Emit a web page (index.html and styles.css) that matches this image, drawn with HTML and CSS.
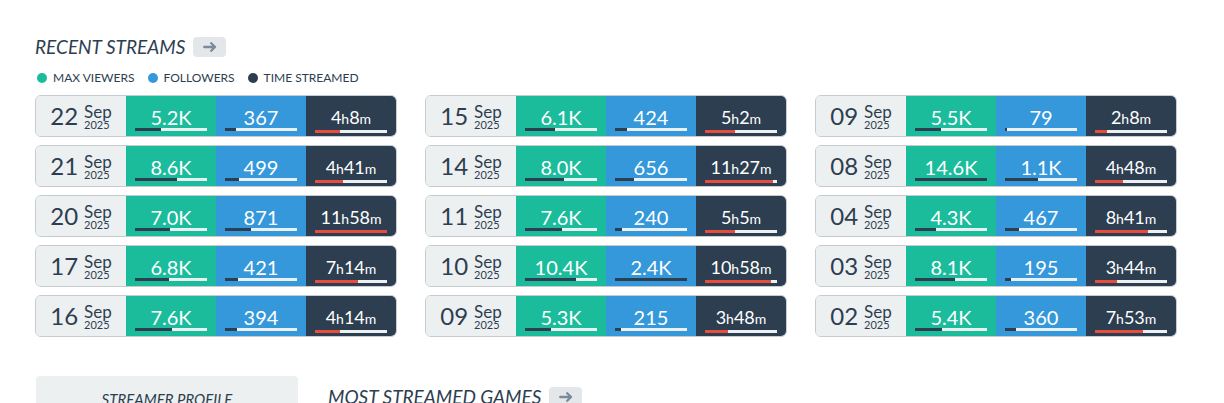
FILE: index.html
```html
<!DOCTYPE html>
<html>
<head>
<meta charset="utf-8">
<link rel="stylesheet" href="styles.css">
</head>
<body>
<div class="page">
  <div class="heading">
    <h2 class="heading-title">RECENT STREAMS</h2>
    <span class="arrow-btn"><svg width="14" height="10" viewBox="0 0 14 10"><path d="M1.2 5H12M8.2 1.2L12 5L8.2 8.8" fill="none" stroke="#7b8a9a" stroke-width="2.3" stroke-linecap="round" stroke-linejoin="round"/></svg></span>
  </div>
  <div class="legend">
    <span class="legend-item"><i class="dot dot-green"></i>MAX VIEWERS</span>
    <span class="legend-item"><i class="dot dot-blue"></i>FOLLOWERS</span>
    <span class="legend-item"><i class="dot dot-dark"></i>TIME STREAMED</span>
  </div>

  <div class="streams">
    <div class="col">
      <div class="card"><div class="date"><span class="day">22</span><span class="my"><span class="mon">Sep</span><span class="yr">2025</span></span></div><div class="cell green"><span class="val">5.2K</span><span class="bar"><span class="fill" style="width:36%"></span></span></div><div class="cell blue"><span class="val">367</span><span class="bar"><span class="fill" style="width:15%"></span></span></div><div class="cell dark"><span class="val time">4<small>h</small>8<small>m</small></span><span class="bar"><span class="fill" style="width:35%"></span></span></div></div>
      <div class="card"><div class="date"><span class="day">21</span><span class="my"><span class="mon">Sep</span><span class="yr">2025</span></span></div><div class="cell green"><span class="val">8.6K</span><span class="bar"><span class="fill" style="width:59%"></span></span></div><div class="cell blue"><span class="val">499</span><span class="bar"><span class="fill" style="width:20%"></span></span></div><div class="cell dark"><span class="val time">4<small>h</small>41<small>m</small></span><span class="bar"><span class="fill" style="width:39%"></span></span></div></div>
      <div class="card"><div class="date"><span class="day">20</span><span class="my"><span class="mon">Sep</span><span class="yr">2025</span></span></div><div class="cell green"><span class="val">7.0K</span><span class="bar"><span class="fill" style="width:48%"></span></span></div><div class="cell blue"><span class="val">871</span><span class="bar"><span class="fill" style="width:36%"></span></span></div><div class="cell dark"><span class="val time">11<small>h</small>58<small>m</small></span><span class="bar"><span class="fill" style="width:100%"></span></span></div></div>
      <div class="card"><div class="date"><span class="day">17</span><span class="my"><span class="mon">Sep</span><span class="yr">2025</span></span></div><div class="cell green"><span class="val">6.8K</span><span class="bar"><span class="fill" style="width:47%"></span></span></div><div class="cell blue"><span class="val">421</span><span class="bar"><span class="fill" style="width:18%"></span></span></div><div class="cell dark"><span class="val time">7<small>h</small>14<small>m</small></span><span class="bar"><span class="fill" style="width:60%"></span></span></div></div>
      <div class="card"><div class="date"><span class="day">16</span><span class="my"><span class="mon">Sep</span><span class="yr">2025</span></span></div><div class="cell green"><span class="val">7.6K</span><span class="bar"><span class="fill" style="width:52%"></span></span></div><div class="cell blue"><span class="val">394</span><span class="bar"><span class="fill" style="width:16%"></span></span></div><div class="cell dark"><span class="val time">4<small>h</small>14<small>m</small></span><span class="bar"><span class="fill" style="width:35%"></span></span></div></div>
    </div>
    <div class="col">
      <div class="card"><div class="date"><span class="day">15</span><span class="my"><span class="mon">Sep</span><span class="yr">2025</span></span></div><div class="cell green"><span class="val">6.1K</span><span class="bar"><span class="fill" style="width:42%"></span></span></div><div class="cell blue"><span class="val">424</span><span class="bar"><span class="fill" style="width:17%"></span></span></div><div class="cell dark"><span class="val time">5<small>h</small>2<small>m</small></span><span class="bar"><span class="fill" style="width:42%"></span></span></div></div>
      <div class="card"><div class="date"><span class="day">14</span><span class="my"><span class="mon">Sep</span><span class="yr">2025</span></span></div><div class="cell green"><span class="val">8.0K</span><span class="bar"><span class="fill" style="width:54%"></span></span></div><div class="cell blue"><span class="val">656</span><span class="bar"><span class="fill" style="width:26%"></span></span></div><div class="cell dark"><span class="val time">11<small>h</small>27<small>m</small></span><span class="bar"><span class="fill" style="width:95%"></span></span></div></div>
      <div class="card"><div class="date"><span class="day">11</span><span class="my"><span class="mon">Sep</span><span class="yr">2025</span></span></div><div class="cell green"><span class="val">7.6K</span><span class="bar"><span class="fill" style="width:52%"></span></span></div><div class="cell blue"><span class="val">240</span><span class="bar"><span class="fill" style="width:10%"></span></span></div><div class="cell dark"><span class="val time">5<small>h</small>5<small>m</small></span><span class="bar"><span class="fill" style="width:42%"></span></span></div></div>
      <div class="card"><div class="date"><span class="day">10</span><span class="my"><span class="mon">Sep</span><span class="yr">2025</span></span></div><div class="cell green"><span class="val">10.4K</span><span class="bar"><span class="fill" style="width:71%"></span></span></div><div class="cell blue"><span class="val">2.4K</span><span class="bar"><span class="fill" style="width:100%"></span></span></div><div class="cell dark"><span class="val time">10<small>h</small>58<small>m</small></span><span class="bar"><span class="fill" style="width:92%"></span></span></div></div>
      <div class="card"><div class="date"><span class="day">09</span><span class="my"><span class="mon">Sep</span><span class="yr">2025</span></span></div><div class="cell green"><span class="val">5.3K</span><span class="bar"><span class="fill" style="width:36%"></span></span></div><div class="cell blue"><span class="val">215</span><span class="bar"><span class="fill" style="width:9%"></span></span></div><div class="cell dark"><span class="val time">3<small>h</small>48<small>m</small></span><span class="bar"><span class="fill" style="width:32%"></span></span></div></div>
    </div>
    <div class="col">
      <div class="card"><div class="date"><span class="day">09</span><span class="my"><span class="mon">Sep</span><span class="yr">2025</span></span></div><div class="cell green"><span class="val">5.5K</span><span class="bar"><span class="fill" style="width:36%"></span></span></div><div class="cell blue"><span class="val">79</span><span class="bar"><span class="fill" style="width:3%"></span></span></div><div class="cell dark"><span class="val time">2<small>h</small>8<small>m</small></span><span class="bar"><span class="fill" style="width:17%"></span></span></div></div>
      <div class="card"><div class="date"><span class="day">08</span><span class="my"><span class="mon">Sep</span><span class="yr">2025</span></span></div><div class="cell green"><span class="val">14.6K</span><span class="bar"><span class="fill" style="width:100%"></span></span></div><div class="cell blue"><span class="val">1.1K</span><span class="bar"><span class="fill" style="width:46%"></span></span></div><div class="cell dark"><span class="val time">4<small>h</small>48<small>m</small></span><span class="bar"><span class="fill" style="width:39%"></span></span></div></div>
      <div class="card"><div class="date"><span class="day">04</span><span class="my"><span class="mon">Sep</span><span class="yr">2025</span></span></div><div class="cell green"><span class="val">4.3K</span><span class="bar"><span class="fill" style="width:29%"></span></span></div><div class="cell blue"><span class="val">467</span><span class="bar"><span class="fill" style="width:19%"></span></span></div><div class="cell dark"><span class="val time">8<small>h</small>41<small>m</small></span><span class="bar"><span class="fill" style="width:73%"></span></span></div></div>
      <div class="card"><div class="date"><span class="day">03</span><span class="my"><span class="mon">Sep</span><span class="yr">2025</span></span></div><div class="cell green"><span class="val">8.1K</span><span class="bar"><span class="fill" style="width:55%"></span></span></div><div class="cell blue"><span class="val">195</span><span class="bar"><span class="fill" style="width:8%"></span></span></div><div class="cell dark"><span class="val time">3<small>h</small>44<small>m</small></span><span class="bar"><span class="fill" style="width:31%"></span></span></div></div>
      <div class="card"><div class="date"><span class="day">02</span><span class="my"><span class="mon">Sep</span><span class="yr">2025</span></span></div><div class="cell green"><span class="val">5.4K</span><span class="bar"><span class="fill" style="width:37%"></span></span></div><div class="cell blue"><span class="val">360</span><span class="bar"><span class="fill" style="width:15%"></span></span></div><div class="cell dark"><span class="val time">7<small>h</small>53<small>m</small></span><span class="bar"><span class="fill" style="width:66%"></span></span></div></div>
    </div>
  </div>

  <div class="bottom">
    <div class="profile-box"><span class="profile-title">STREAMER PROFILE</span></div>
    <div class="heading games-heading">
      <h2 class="heading-title">MOST STREAMED GAMES</h2>
      <span class="arrow-btn"><svg width="14" height="10" viewBox="0 0 14 10"><path d="M1.2 5H12M8.2 1.2L12 5L8.2 8.8" fill="none" stroke="#7b8a9a" stroke-width="2.3" stroke-linecap="round" stroke-linejoin="round"/></svg></span>
    </div>
  </div>
</div>
</body>
</html>
```

FILE: styles.css
```css
* { box-sizing: border-box; }
html, body { margin: 0; padding: 0; background: #fff; }
body {
  font-family: Lato, "Noto Sans", "Liberation Sans", sans-serif;
  color: #2c3e50;
  overflow: hidden;
}
.page {
  padding: 35px 0 0 35px;
  width: 1224px;
  height: 403px;
}
.heading {
  display: flex;
  align-items: center;
  height: 24px;
}
.heading-title {
  margin: 0;
  font-size: 19px;
  line-height: 24px;
  font-weight: 400;
  font-style: italic;
  color: #2c3e50;
}
.arrow-btn {
  display: flex;
  align-items: center;
  justify-content: center;
  width: 33px;
  height: 20px;
  margin-left: 8px;
  background: #e4e7e9;
  border-radius: 4px;
}
.legend {
  display: flex;
  align-items: center;
  margin-top: 12px;
  padding-left: 2px;
  height: 14px;
}
.legend-item {
  display: flex;
  align-items: center;
  font-size: 12px;
  line-height: 14px;
  color: #2c3e50;
  margin-right: 13px;
}
.dot {
  width: 10px;
  height: 10px;
  border-radius: 50%;
  margin-right: 6px;
}
.dot-green { background: #1abc9c; }
.dot-blue { background: #3498db; }
.dot-dark { background: #2c3e50; }

.streams {
  display: flex;
  gap: 28px;
  margin-top: 10px;
}
.col {
  display: flex;
  flex-direction: column;
  gap: 8px;
  width: 362px;
}
.card {
  display: flex;
  height: 42px;
  border: 1px solid #c5cbcf;
  border-radius: 6px;
  overflow: hidden;
}
.date {
  width: 90px;
  background: #ecf0f1;
  display: flex;
  align-items: center;
  justify-content: center;
  gap: 6px;
  color: #2c3e50;
}
.day {
  font-size: 24px;
  line-height: 26px;
}
.my {
  display: flex;
  flex-direction: column;
  padding-top: 2px;
}
.mon {
  font-size: 17px;
  line-height: 15px;
}
.yr {
  font-size: 11px;
  line-height: 12px;
}
.cell {
  width: 90px;
  display: flex;
  flex-direction: column;
  align-items: center;
  padding-top: 11px;
  color: #fff;
}
.green { background: #1abc9c; }
.blue { background: #3498db; }
.dark { background: #2c3e50; }
.val {
  font-size: 20px;
  line-height: 20px;
  white-space: nowrap;
}
.time {
  font-size: 18px;
}
.time small {
  font-size: 14px;
}
.bar {
  display: block;
  width: 72px;
  height: 3px;
  margin-top: 1px;
  background: #ecf0f1;
}
.fill {
  display: block;
  height: 3px;
  background: #2c3e50;
}
.dark .fill { background: #e74c3c; }

.bottom {
  display: flex;
  margin-top: 39px;
  padding-left: 1px;
}
.profile-box {
  width: 262px;
  height: 60px;
  background: #ecf0f1;
  border-radius: 4px 4px 0 0;
  padding-top: 13px;
  text-align: center;
}
.profile-title {
  font-size: 15px;
  line-height: 18px;
  font-style: italic;
  color: #2c3e50;
}
.games-heading {
  margin-left: 30px;
  margin-top: 9px;
}
```
